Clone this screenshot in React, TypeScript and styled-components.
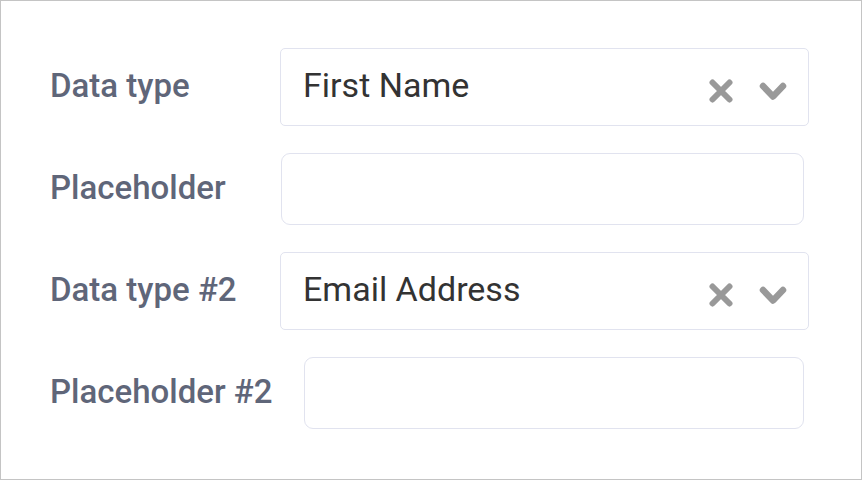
import React from "react";
import styled, { createGlobalStyle } from "styled-components";

const GlobalStyle = createGlobalStyle`
  html, body { margin: 0; padding: 0; background: #ffffff; }
  * { box-sizing: border-box; }
`;

const Frame = styled.div`
  width: 862px;
  height: 480px;
  border: 1px solid #c4c4c4;
  background: #ffffff;
  padding: 47px 52px 0 49px;
  display: flex;
  flex-direction: column;
  gap: 27px;
  font-family: Roboto, "Liberation Sans", sans-serif;
`;

const Row = styled.div`
  display: flex;
  align-items: center;
`;

const Label = styled.label`
  min-width: 230px;
  padding: 0 31px 3px 0;
  font-size: 33px;
  font-weight: 500;
  color: #5f6679;
  white-space: nowrap;
`;

const Select = styled.div`
  flex: 1;
  height: 78px;
  border: 1px solid #e1e3ef;
  border-radius: 5px;
  display: flex;
  align-items: center;
  padding: 0 21px 0 22px;
`;

const Value = styled.span`
  flex: 1;
  font-size: 34px;
  color: #333333;
  padding-bottom: 4px;
`;

const Icons = styled.div`
  display: flex;
  align-items: center;
  gap: 26px;
  padding-top: 8px;
`;

const Input = styled.input`
  flex: 1;
  height: 72px;
  margin: 0 5px 0 1px;
  border: 1px solid #e1e3ef;
  border-radius: 9px;
  background: #ffffff;
  outline: none;
  font-size: 32px;
  font-family: inherit;
  padding: 0 21px;
`;

const ClearIcon = () => (
  <svg width="24" height="24" viewBox="0 0 24 24" style={{ display: "block" }}>
    <path d="M3.5 3.5 L20.5 20.5 M20.5 3.5 L3.5 20.5" stroke="#999999" strokeWidth="6" strokeLinecap="round" fill="none" />
  </svg>
);

const ChevronIcon = () => (
  <svg width="28" height="20" viewBox="0 0 28 20" style={{ display: "block", marginTop: 1 }}>
    <polyline points="4,4 14,14.5 24,4" stroke="#999999" strokeWidth="6.5" strokeLinecap="round" strokeLinejoin="round" fill="none" />
  </svg>
);

const SelectField = ({ label, value }: { label: string; value: string }) => (
  <Row>
    <Label>{label}</Label>
    <Select>
      <Value>{value}</Value>
      <Icons>
        <ClearIcon />
        <ChevronIcon />
      </Icons>
    </Select>
  </Row>
);

const InputField = ({ label }: { label: string }) => (
  <Row>
    <Label>{label}</Label>
    <Input type="text" />
  </Row>
);

export default function App() {
  return (
    <>
      <GlobalStyle />
      <Frame>
        <SelectField label="Data type" value="First Name" />
        <InputField label="Placeholder" />
        <SelectField label="Data type #2" value="Email Address" />
        <InputField label="Placeholder #2" />
      </Frame>
    </>
  );
}
